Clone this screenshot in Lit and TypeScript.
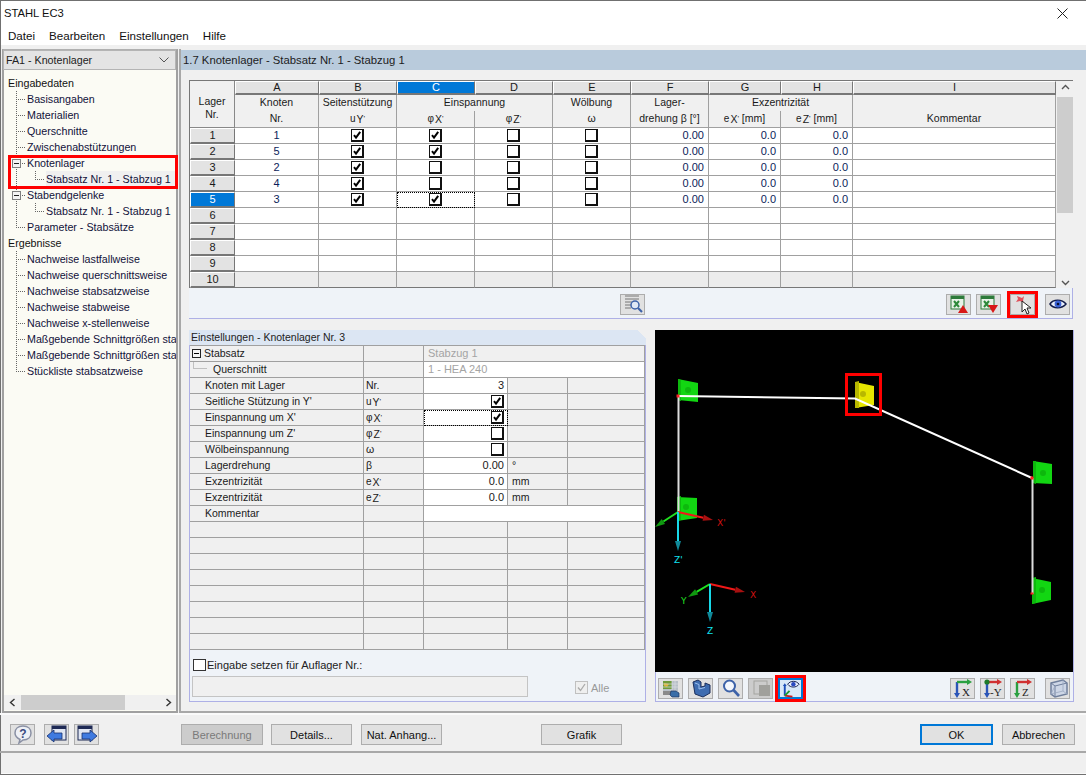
import { LitElement, html, css, svg } from "lit";
import { customElement } from "lit/decorators.js";

const check = html`<svg class="tick" viewBox="0 0 10 10"><path d="M2 5.2 L4 7.6 L8.2 1.8" fill="none" stroke="#000" stroke-width="2"/></svg>`;
const cb = (on: boolean) => html`<span class="cb">${on ? check : ""}</span>`;
const sym = (a: string, b: string) => html`<span class="sym">${a}<span class="sub">${b}</span><span class="pr">'</span></span>`;

type TreeRow = { t: string; k: string; sel?: boolean };
const tree: TreeRow[] = [
  { t: "Eingabedaten", k: "root" },
  { t: "Basisangaben", k: "l1" },
  { t: "Materialien", k: "l1" },
  { t: "Querschnitte", k: "l1" },
  { t: "Zwischenabstützungen", k: "l1" },
  { t: "Knotenlager", k: "ex" },
  { t: "Stabsatz Nr. 1 - Stabzug 1", k: "l2", sel: true },
  { t: "Stabendgelenke", k: "ex" },
  { t: "Stabsatz Nr. 1 - Stabzug 1", k: "l2" },
  { t: "Parameter - Stabsätze", k: "l1 last" },
  { t: "Ergebnisse", k: "root" },
  { t: "Nachweise lastfallweise", k: "l1" },
  { t: "Nachweise querschnittsweise", k: "l1" },
  { t: "Nachweise stabsatzweise", k: "l1" },
  { t: "Nachweise stabweise", k: "l1" },
  { t: "Nachweise x-stellenweise", k: "l1" },
  { t: "Maßgebende Schnittgrößen sta", k: "l1" },
  { t: "Maßgebende Schnittgrößen sta", k: "l1" },
  { t: "Stückliste stabsatzweise", k: "l1 last" },
];

const letters = ["A", "B", "C", "D", "E", "F", "G", "H", "I"];
const rowsData: [string, boolean, boolean][] = [
  ["1", true, true],
  ["5", true, true],
  ["2", true, false],
  ["4", true, false],
  ["3", true, true],
];

const icons: Record<string, unknown> = {
  search: svg`<path d="M3 2h14M3 5h14M3 8h8M3 11h6M3 14h6" stroke="#777" fill="none"/><circle cx="13" cy="11" r="4" fill="#dfe8f5" stroke="#3d62a8" stroke-width="1.5"/><path d="M16 14l4 4" stroke="#3d62a8" stroke-width="2.2"/>`,
  xlsUp: svg`<rect x="3" y="2" width="13" height="13" fill="#e8f2e8" stroke="#2d7a3a"/><rect x="3" y="2" width="13" height="3" fill="#2d7a3a"/><path d="M6 7l5 6M11 7l-5 6" stroke="#2d8a3a" stroke-width="2"/><path d="M10 19l5-8 5 8z" fill="#d81818"/>`,
  xlsDown: svg`<rect x="3" y="2" width="13" height="13" fill="#e8f2e8" stroke="#2d7a3a"/><rect x="3" y="2" width="13" height="3" fill="#2d7a3a"/><path d="M6 7l5 6M11 7l-5 6" stroke="#2d8a3a" stroke-width="2"/><path d="M10 11h10l-5 8z" fill="#d81818"/>`,
  pick: svg`<path d="M5 2l5 2 2-2-1 5 1 2-4-2-4 1 2-3z" fill="#e0505a"/><path d="M10 7v11l3-3 2 5 2-1-2-5h4z" fill="#fff" stroke="#222"/>`,
  eye: svg`<path d="M3 10c3-5 12-5 16 0-4 5-13 5-16 0z" fill="#e8eefc" stroke="#111b4a" stroke-width="1.5"/><circle cx="11" cy="10" r="3.4" fill="#3b62d6"/><circle cx="11" cy="10" r="1.3" fill="#0a1030"/>`,
  render: svg`<rect x="3" y="3" width="15" height="10" fill="#b8c0c8"/><rect x="3" y="3" width="9" height="8" fill="#6f9a3a"/><path d="M4 5l5 1-2 3-3-1z" fill="#d8b030"/><path d="M12 3v10M15 3v10M3 6h15M3 9h15" stroke="#d8dce2" stroke-width=".7"/><rect x="3" y="13" width="8" height="4" fill="#8a8a8a"/><path d="M11 13h5l3 2v4h-7l-2-2z" fill="#3a6ea8" stroke="#1c3560" stroke-width=".7"/>`,
  box: svg`<path d="M3 4l5-2 3 2v5l4-1v-3l5 2v8l-7 4-8-3z" fill="#3e6cb0" stroke="#1c2f5c"/><path d="M5 5l4 1.5V11l6-1.5" stroke="#9cc0ee" fill="none"/>`,
  lens: svg`<circle cx="9.5" cy="8" r="5.5" fill="#f4f7fc" stroke="#3d62a8" stroke-width="2"/><path d="M13.5 12l5.5 6" stroke="#3d62a8" stroke-width="2.6"/>`,
  squares: svg`<rect x="4" y="3" width="13" height="13" fill="none" stroke="#a4a4a0"/><rect x="9" y="7" width="11" height="11" fill="#a0a09c"/>`,
  axesEye: svg`<path d="M5 18V7" stroke="#1d4fb8" stroke-width="2"/><path d="M3 8l2-3 2 3z" fill="#1d4fb8"/><path d="M5 18l8 1" stroke="#d01818" stroke-width="2"/><path d="M5 18l5-5" stroke="#1f9a30" stroke-width="2"/><path d="M8 6c3-4 9-4 12 0-3 4-9 4-12 0z" fill="#e8eefc" stroke="#111b4a"/><circle cx="14" cy="6" r="2.3" fill="#2a4ac0"/>`,
  viewX: svg`<path d="M5 4v12" stroke="#2a55b8" stroke-width="2.4"/><path d="M2 15l3 5 3-5z" fill="#2a55b8"/><path d="M5 4h11" stroke="#2aa040" stroke-width="2.4"/><path d="M15 1l5 3-5 3z" fill="#2aa040"/><text x="10" y="18" class="vt">X</text>`,
  viewY: svg`<path d="M5 4v12" stroke="#2a55b8" stroke-width="2.4"/><path d="M2 15l3 5 3-5z" fill="#2a55b8"/><path d="M5 4h11" stroke="#d03030" stroke-width="2.4"/><path d="M15 1l5 3-5 3z" fill="#d03030"/><circle cx="5" cy="4" r="2.6" fill="#1d7a2a"/><text x="8" y="18" class="vt">-Y</text>`,
  viewZ: svg`<path d="M5 4v12" stroke="#2aa040" stroke-width="2.4"/><path d="M2 15l3 5 3-5z" fill="#2aa040"/><path d="M5 4h11" stroke="#d03030" stroke-width="2.4"/><path d="M15 1l5 3-5 3z" fill="#d03030"/><text x="10" y="18" class="vt">Z</text>`,
  cube: svg`<path d="M4 5l12-3 4 3v11l-12 3-4-3z" fill="#cdd6e6" stroke="#6f7f9c" stroke-width="1.5"/><path d="M8 8l12-3M8 8v11M8 8L4 5" stroke="#6f7f9c" fill="none"/><path d="M4 16l4-8M16 2v11l4 3M4 16l12-3" stroke="#9aa8c0" fill="none" stroke-width=".8"/>`,
  help: svg`<path d="M11 2c5 0 8 3 8 7s-3 7-8 7l-4 3 1-3.5C5 14 3 12 3 9c0-4 3-7 8-7z" fill="#eef0f5" stroke="#8a90a4" stroke-width="1.5"/><text x="11" y="14" class="qm">?</text>`,
  prev: svg`<rect x="6" y="2" width="14" height="14" fill="#dfe5f2" stroke="#1f2a55"/><rect x="6" y="2" width="14" height="3" fill="#1f2a55"/><path d="M1 12l7-6v3h8v6H8v3z" fill="#3f7ae0" stroke="#16306e" stroke-width=".8"/>`,
  next: svg`<rect x="2" y="2" width="14" height="14" fill="#dfe5f2" stroke="#1f2a55"/><rect x="2" y="2" width="14" height="3" fill="#1f2a55"/><path d="M21 12l-7-6v3H6v6h8v3z" fill="#3f7ae0" stroke="#16306e" stroke-width=".8"/>`,
};

const ico = (n: string, cls = "") =>
  html`<span class="tb ${cls}"><svg viewBox="0 0 22 21" width="22" height="21">${icons[n]}</svg></span>`;

const block = (pts: string, side: string, fill: string, dark: string, cx: number, cy: number) => svg`
  <polygon points=${pts} fill=${fill}/>
  <polygon points=${side} fill=${dark}/>
  <circle cx=${cx} cy=${cy} r="3" fill=${dark}/>`;

const arrow = (x1: number, y1: number, x2: number, y2: number, c: string, dark: string) => {
  const dx = x2 - x1, dy = y2 - y1, l = Math.hypot(dx, dy), ux = dx / l, uy = dy / l;
  const bx = x2 - ux * 10, by = y2 - uy * 10;
  return svg`<line x1=${x1} y1=${y1} x2=${bx} y2=${by} stroke=${c} stroke-width="2"/>
    <polygon points="${x2},${y2} ${bx - uy * 3},${by + ux * 3} ${bx + uy * 3},${by - ux * 3}" fill=${dark}/>`;
};

@customElement("app-root")
export class AppRoot extends LitElement {
  static styles = css`
    :host { display: block; width: 1086px; height: 775px; overflow: hidden; font-family: "Liberation Sans", Arial, sans-serif; font-size: 11px; color: #000; }
    * { box-sizing: border-box; }
    .win { width: 1086px; height: 775px; display: flex; flex-direction: column; background: #f0f0f0; border: 1px solid #707070; border-width: 1px 0 1px 1px; }
    .title { height: 24px; background: #fff; display: flex; align-items: center; padding-left: 3px; font-size: 11.2px; color: #111; flex: none; justify-content: space-between; }
    .close { width: 40px; display: flex; justify-content: center; margin-right: 4px; }
    .menu { height: 20px; background: #fff; display: flex; gap: 14px; padding-left: 7px; align-items: center; font-size: 11.6px; flex: none; color: #111; }
    .body { height: 668px; display: flex; padding: 4px 0 0 1px; flex: none; }

    .left { width: 176px; height: 664px; border-style: solid; border-width: 1px 2px 2px 2px; display: flex; flex-direction: column; background: #fbfbf4; flex: none; position: relative; border-color: #b0b0b0 #a0a0a0 #a0a0a0 #a0a0a0; }
    .combo { height: 20px; background: #e4e4e4; border: 1px solid #b4b4b4; display: flex; align-items: center; justify-content: space-between; padding: 0 6px 0 2px; font-size: 10.7px; color: #222; flex: none; margin-left: -1px; }
    .tree { flex: 1; padding-top: 5px; font-size: 10.7px; color: #11113a; overflow: hidden; }
    .r { height: 16px; display: flex; align-items: center; white-space: nowrap; overflow: hidden; }
    .r.root { padding-left: 4px; color: #111; }
    .conn { width: 10px; height: 16px; flex: none; margin-right: 1px;
      background-image: repeating-linear-gradient(to bottom, #666 0 1px, transparent 1px 2px), repeating-linear-gradient(to right, #666 0 1px, transparent 1px 2px);
      background-size: 1px 100%, 100% 1px; background-position: left top, left 8px; background-repeat: no-repeat; }
    .last > .conn { background-size: 1px 50%, 100% 1px; }
    .l1 > .conn, .ex > .conn { margin-left: 12px; }
    .l2 > .guide { width: 1px; height: 16px; margin-left: 12px; flex: none; background: repeating-linear-gradient(to bottom, #666 0 1px, transparent 1px 2px); }
    .l2 > .conn { margin-left: 18px; background-size: 1px 50%, 100% 1px; }
    .bx { display: block; width: 9px; height: 9px; margin: 4px 0 0 -4px; background: #f4f4f4; border: 1px solid #808080; }
    .bx::after { content: ""; display: block; margin: 3px 1px 0; height: 1px; background: #222; }
    .sel .lbl { background: #f0f0f0; flex: 1; line-height: 16px; }
    .redtree { position: absolute; left: 4px; top: 105px; width: 170px; height: 34px; border: 3px solid #f00; pointer-events: none; }
    .hs { height: 15px; margin-bottom: 1px; background: #f0f0f0; display: flex; align-items: center; justify-content: space-between; padding: 0 4px 0 5px; flex: none; }
    .hs .th { width: 104px; height: 15px; background: #cdcdcd; margin-left: 5px; }

    .main { flex: 1; margin-left: 1px; border-left: 2px solid #a8a8a8; border-bottom: 2px solid #a8a8a8; height: 664px; display: flex; flex-direction: column; padding-top: 1px; }
    .head { height: 20px; background: #b9cbdc; padding-left: 2px; display: flex; align-items: center; font-size: 11.3px; color: #1c1c1c; flex: none; }
    .tablewrap { margin: 10px 0 0 8px; width: 884px; display: flex; flex: none; border: 1px solid #777; border-width: 1px 0 0 1px; background: #f0f0f0; }
    .grid { display: grid; grid-template-columns: 45px 84px 78px 78px 78px 78px 78px 72px 72px 203px; grid-template-rows: 14px 16px 17px repeat(10, 16px); width: 866px; flex: none; }
    .c { display: flex; align-items: center; justify-content: center; border-right: 1px solid #a0a0a0; border-bottom: 1px solid #a0a0a0; font-size: 10.5px; color: #1a1a1a; white-space: nowrap; background: #fff; overflow: hidden; padding-bottom: 1px; }
    .corner { grid-row: 1 / span 3; flex-direction: column; background: #f0f0f0; padding: 7px 0 0; line-height: 13px; border-right-color: #888; border-bottom-color: #888; }
    .let { background: #e3e3e3; border-bottom: 2px solid #777; border-right: 1px solid #777; border-left: 1px solid #fff; border-top: 1px solid #fff; font-size: 11px; line-height: 11px; padding: 0; }
    .let.on { background: #0078d7; color: #fff; }
    .h1, .h2 { background: #f0f0f0; }
    .h1 { border-bottom: none; padding-bottom: 2px; }
    .h2 { padding-bottom: 2px; }
    .h1.s2 { grid-column: span 2; }
    .rh { background: #e3e3e3; border-right: 1px solid #777; border-bottom: 2px solid #777; border-left: 1px solid #fff; border-top: 1px solid #fff; font-size: 11px; padding-bottom: 1px; }
    .rh.on { background: #0078d7; color: #fff; border-color: #fff #777 #777 #fff; }
    .num { justify-content: flex-end; padding-right: 4px; color: #0b1d5a; font-size: 11px; }
    .mid { color: #0b1d5a; font-size: 11px; }
    .foot { background: #ececec; }
    .focus { outline: 1px dotted #000; outline-offset: -1px; }
    .lastrow { border-bottom-color: #777; }
    .vs { width: 16px; margin-left: 1px; background: #f0f0f0; display: flex; flex-direction: column; align-items: center; height: 207px; }
    .vs .thumb { width: 16px; height: 116px; background: #cdcdcd; margin-top: 5px; flex: none; }
    .ar { height: 11px; display: flex; align-items: center; justify-content: center; flex: none; }
    .ar svg { display: block; }

    .strip { margin-left: 8px; width: 884px; height: 31px; background: #eff3f8; border: 1px solid #aeb0e6; border-width: 0 1px 1px 0; display: flex; padding: 6px 2px 0 431px; flex: none; }
    .sp { flex: 1; }
    .tb { width: 25px; height: 21px; background: #e1e1e1; border: 1px solid #adadad; display: flex; align-items: center; justify-content: center; flex: none; }
    .tb svg { display: block; }
    .m5 { margin-left: 5px; }
    .m9 { margin-left: 9px; }
    .m10 { margin-left: 10px; }
    .hl { outline: 3px solid #f00; }
    .blue { border: 2px solid #0078d7; background: #d8e8f8; }
    .dis { background: #cccccc; }

    .lower { display: flex; margin: 11px 0 0 8px; gap: 9px; height: 372px; flex: none; }
    .set { width: 457px; display: flex; flex-direction: column; background: #eff3f8; border: 1px solid #aeb0e6; border-width: 0 1px 1px 1px; }
    .settitle { height: 15px; background: linear-gradient(225deg, #f0f0f0 6px, #dce6f3 6px); font-size: 10.5px; color: #222; display: flex; align-items: center; flex: none; margin: 0 -1px; padding: 0 0 1px 2px; }
    .pg { display: grid; grid-template-columns: 174px 60px 84px 60px 77px; grid-auto-rows: 16px; border-top: 1px solid #a0a0a0; flex: none; }
    .p { background: #f0f0f0; border-right: 1px solid #a0a0a0; border-bottom: 1px solid #a0a0a0; display: flex; align-items: center; padding: 0 0 1px 2px; font-size: 10.5px; color: #1a1a1a; white-space: nowrap; overflow: hidden; min-width: 0; }
    .pn { padding-left: 15px; }
    .nm { padding-left: 0; }
    .w { background: #fff; }
    .val { justify-content: flex-end; padding: 0 3px 1px 0; color: #1a1a1a; font-size: 11px; }
    .s3c { grid-column: span 3; }
    .gray { color: #a4a4a4; padding-left: 4px; font-size: 11px; }
    .unit { padding-left: 4px; }
    .pm { display: inline-block; width: 9px; height: 9px; border: 1px solid #222; background: #f4f4f4; margin: 0 3px 0 2px; flex: none; }
    .pm::after { content: ""; display: block; height: 1px; background: #000; margin: 3px 1px 0; }
    .tl { width: 14px; height: 8px; border-left: 1px solid #c0c0c0; border-bottom: 1px solid #c0c0c0; margin: -8px 6px 0 3px; flex: none; }
    .cb { width: 13px; height: 13px; background: #fff; border: 1px solid #111; border-right-width: 2px; border-bottom-width: 2px; display: inline-flex; align-items: center; justify-content: center; flex: none; }
    .tick { width: 10px; height: 10px; display: block; }
    .sym { display: inline-flex; align-items: baseline; font-size: 10px; color: #222; }
    .sub { font-size: 10.5px; margin-left: 1px; position: relative; top: 1px; }
    .pr { font-size: 8px; position: relative; top: -1px; }
    .setfoot { flex: 1; padding: 9px 2px 0 3px; display: flex; flex-direction: column; }
    .ck { display: flex; align-items: center; gap: 1px; font-size: 11px; color: #222; }
    .ck .box { width: 13px; height: 12px; border: 1px solid #333; background: #fff; }
    .fr { display: flex; margin-top: 5px; align-items: flex-end; }
    .inp { width: 336px; height: 21px; background: #f0f0f0; border: 1px solid #c4c4c4; margin-left: -1px; }
    .alle { display: flex; align-items: center; gap: 3px; margin-left: 47px; color: #999; font-size: 11px; margin-bottom: 3px; }
    .alle .box { width: 13px; height: 13px; border: 1px solid #c0c0c0; background: #efefef; display: block; }

    .gfx { width: 419px; display: flex; flex-direction: column; background: #eff3f8; border: 1px solid #aeb0e6; border-width: 0 1px 1px 1px; }
    .cv { width: 418px; height: 342px; margin-left: -1px; background: #000; flex: none; display: block; }
    .cv text { font-family: "DejaVu Sans", sans-serif; font-size: 9px; }
    .gt { display: flex; padding: 6px 3px 0 2px; gap: 5px; }
    .gt .m5 { margin-left: 5px; }

    .vt { font-family: "Liberation Serif", serif; font-size: 11px; fill: #222; }
    .qm { font-family: "Liberation Sans", sans-serif; font-size: 12px; font-weight: bold; fill: #3a4a80; text-anchor: middle; }

    .foot2 { height: 40px; border-bottom: 2px solid #a8a8a8; border-top: 2px solid #fafafa; display: flex; padding: 9px 0 0 10px; flex: none; margin-left: -1px; }
    .btn { height: 21px; width: 81px; background: #e1e1e1; border: 1px solid #adadad; display: flex; align-items: center; justify-content: center; font-size: 11px; color: #111; flex: none; }
    .btn.off { width: 82px; background: #cccccc; color: #7a7a7a; margin-left: 82px; }
    .btn.det { margin-left: 8px; }
    .btn.nat { margin-left: 9px; }
    .btn.gra { margin-left: 99px; }
    .btn.ok { width: 73px; border: 2px solid #0078d7; margin-left: 298px; }
    .btn.ab { width: 73px; margin-left: 9px; }
    .status { flex: 1; background: #f0f0f0; border-bottom: 1px solid #fafafa; }
  `;

  render() {
    return html`<div class="win">
      <div class="title"><span>STAHL EC3</span>
        <span class="close"><svg width="11" height="11" viewBox="0 0 11 11"><path d="M.5.5l10 10M10.5.5l-10 10" stroke="#222"/></svg></span>
      </div>
      <div class="menu"><span>Datei</span><span>Bearbeiten</span><span>Einstellungen</span><span>Hilfe</span></div>
      <div class="body">
        <div class="left">
          <div class="combo"><span>FA1 - Knotenlager</span>
            <svg width="10" height="6" viewBox="0 0 10 6"><path d="M.5.5L5 5 9.5.5" fill="none" stroke="#555"/></svg>
          </div>
          <div class="tree">
            ${tree.map((r) => html`<div class="r ${r.k} ${r.sel ? "sel" : ""}">
              ${r.k === "root" ? "" : r.k === "l2"
                ? html`<span class="guide"></span><span class="conn"></span>`
                : html`<span class="conn">${r.k === "ex" ? html`<span class="bx"></span>` : ""}</span>`}
              <span class="lbl">${r.t}</span></div>`)}
          </div>
          <div class="redtree"></div>
          <div class="hs">
            <svg width="7" height="9" viewBox="0 0 7 9"><path d="M5.5 1L1.5 4.5 5.5 8" fill="none" stroke="#333" stroke-width="1.4"/></svg>
            <span class="th"></span><span class="sp"></span>
            <svg width="7" height="9" viewBox="0 0 7 9"><path d="M1.5 1L5.5 4.5 1.5 8" fill="none" stroke="#333" stroke-width="1.4"/></svg>
          </div>
        </div>
        <div class="main">
          <div class="head">1.7 Knotenlager - Stabsatz Nr. 1 - Stabzug 1</div>
          <div class="tablewrap">
            <div class="grid">
              <div class="c corner"><span>Lager</span><span>Nr.</span></div>
              ${letters.map((l) => html`<div class="c let ${l === "C" ? "on" : ""}">${l}</div>`)}
              <div class="c h1">Knoten</div>
              <div class="c h1">Seitenstützung</div>
              <div class="c h1 s2">Einspannung</div>
              <div class="c h1">Wölbung</div>
              <div class="c h1">Lager-</div>
              <div class="c h1 s2">Exzentrizität</div>
              <div class="c h1"></div>
              <div class="c h2">Nr.</div>
              <div class="c h2">${sym("u", "Y")}</div>
              <div class="c h2">${sym("φ", "X")}</div>
              <div class="c h2">${sym("φ", "Z")}</div>
              <div class="c h2">ω</div>
              <div class="c h2">drehung β [°]</div>
              <div class="c h2">${sym("e", "X")}&nbsp;[mm]</div>
              <div class="c h2">${sym("e", "Z")}&nbsp;[mm]</div>
              <div class="c h2">Kommentar</div>
              ${Array.from({ length: 10 }, (_, i) => {
                const d = rowsData[i];
                const foot = i === 9 ? "foot lastrow" : "";
                return html`
                  <div class="c rh ${i === 4 ? "on" : ""}">${i + 1}</div>
                  <div class="c mid ${foot}">${d ? d[0] : ""}</div>
                  <div class="c ${foot}">${d ? cb(d[1]) : ""}</div>
                  <div class="c ${foot} ${i === 4 ? "focus" : ""}">${d ? cb(d[2]) : ""}</div>
                  <div class="c ${foot}">${d ? cb(false) : ""}</div>
                  <div class="c ${foot}">${d ? cb(false) : ""}</div>
                  <div class="c num ${foot}">${d ? "0.00" : ""}</div>
                  <div class="c num ${foot}">${d ? "0.0" : ""}</div>
                  <div class="c num ${foot}">${d ? "0.0" : ""}</div>
                  <div class="c ${foot}"></div>`;
              })}
            </div>
            <div class="vs">
              <span class="ar"><svg width="9" height="6" viewBox="0 0 9 6"><path d="M1 5l3.5-3.5L8 5" fill="none" stroke="#555" stroke-width="1.4"/></svg></span>
              <span class="thumb"></span><span class="sp"></span>
              <span class="ar"><svg width="9" height="6" viewBox="0 0 9 6"><path d="M1 1l3.5 3.5L8 1" fill="none" stroke="#555" stroke-width="1.4"/></svg></span>
            </div>
          </div>
          <div class="strip">
            ${ico("search")}<span class="sp"></span>
            ${ico("xlsUp")}${ico("xlsDown", "m5")}${ico("pick", "hl m9")}${ico("eye", "m10")}
          </div>
          <div class="lower">
            <div class="set">
              <div class="settitle">Einstellungen - Knotenlager Nr. 3</div>
              <div class="pg">
                <div class="p nm"><span class="pm"></span>Stabsatz</div><div class="p"></div><div class="p s3c gray">Stabzug 1</div>
                <div class="p nm"><span class="tl"></span>Querschnitt</div><div class="p"></div><div class="p s3c w gray">1 - HEA 240</div>
                ${this.prow("Knoten mit Lager", "Nr.", html`3`, "")}
                ${this.prow("Seitliche Stützung in Y'", sym("u", "Y"), cb(true), "")}
                ${this.prow("Einspannung um X'", sym("φ", "X"), cb(true), "", true)}
                ${this.prow("Einspannung um Z'", sym("φ", "Z"), cb(false), "")}
                ${this.prow("Wölbeinspannung", "ω", cb(false), "")}
                ${this.prow("Lagerdrehung", "β", html`0.00`, "°")}
                ${this.prow("Exzentrizität", sym("e", "X"), html`0.0`, "mm")}
                ${this.prow("Exzentrizität", sym("e", "Z"), html`0.0`, "mm")}
                <div class="p pn">Kommentar</div><div class="p"></div><div class="p s3c w"></div>
                ${Array.from({ length: 8 }, () => html`<div class="p"></div><div class="p"></div><div class="p"></div><div class="p"></div><div class="p"></div>`)}
              </div>
              <div class="setfoot">
                <div class="ck"><span class="box"></span>Eingabe setzen für Auflager Nr.:</div>
                <div class="fr"><span class="inp"></span>
                  <span class="alle"><span class="box"><svg viewBox="0 0 11 11" width="11" height="11"><path d="M2 5.5L4.5 8.5 9 2" fill="none" stroke="#aaa" stroke-width="1.3"/></svg></span>Alle</span>
                </div>
              </div>
            </div>
            <div class="gfx">
              ${this.canvas()}
              <div class="gt">
                ${ico("render")}${ico("box")}${ico("lens")}${ico("squares", "dis")}${ico("axesEye", "hl blue")}
                <span class="sp"></span>
                ${ico("viewX")}${ico("viewY")}${ico("viewZ")}${ico("cube", "m5")}
              </div>
            </div>
          </div>
        </div>
      </div>
      <div class="foot2">
        ${ico("help")}${ico("prev", "m9")}${ico("next", "m5")}
        <span class="btn off">Berechnung</span>
        <span class="btn det">Details...</span>
        <span class="btn nat">Nat. Anhang...</span>
        <span class="btn gra">Grafik</span>
        <span class="btn ok">OK</span>
        <span class="btn ab">Abbrechen</span>
      </div>
      <div class="status"></div>
    </div>`;
  }

  prow(n: string, s: unknown, v: unknown, u: string, focus = false) {
    return html`<div class="p pn">${n}</div><div class="p">${s}</div>
      <div class="p w val ${focus ? "focus" : ""}">${v}</div><div class="p unit">${u}</div><div class="p"></div>`;
  }

  canvas() {
    const g = "#12d612", gd = "#0db80d";
    return html`<svg class="cv" viewBox="0 0 418 342">
      ${block("23,49 43,53 43,72 23,70", "23,49 26,50 26,71 23,70", g, gd, 33, 60)}
      ${block("22,167 42,168 42,188 22,191", "22,167 26,166 26,190 22,191", g, gd, 31, 177)}
      ${block("378,131 397,134 397,154 378,153", "378,131 381,131 381,154 378,153", g, gd, 388, 143)}
      ${block("377,248 396,252 396,270 377,274", "377,248 381,247 381,273 377,274", g, gd, 387, 260)}
      ${block("200,52 219,56 219,75 200,78", "200,52 204,51 204,78 200,78", "#e6e600", "#b8b800", 208, 64)}
      <polyline points="23,66 200,68.5 377,148" fill="none" stroke="#fff" stroke-width="2"/>
      <line x1="23.5" y1="66" x2="23.5" y2="182" stroke="#ddd" stroke-width="2"/>
      <line x1="377.5" y1="148" x2="377.5" y2="264" stroke="#ddd" stroke-width="2"/>
      <g fill="#f22"><rect x="21.5" y="64.5" width="3" height="3"/><rect x="375.5" y="146.5" width="3" height="3"/><rect x="375.5" y="262.5" width="3" height="2"/></g>
      ${arrow(23, 182, 58, 190, "#f01818", "#a81010")}
      ${arrow(23, 182, 0, 197, "#20e020", "#109810")}
      ${arrow(23, 182, 23, 221, "#18d8e8", "#108898")}
      <text x="62" y="196" fill="#d01010">X'</text>
      <text x="19" y="233" fill="#10e0f0">Z'</text>
      ${arrow(55, 254, 90, 262, "#f01818", "#a81010")}
      ${arrow(55, 254, 33, 267, "#20e020", "#109810")}
      ${arrow(55, 254, 55, 292, "#18d8e8", "#108898")}
      <text x="95" y="268" fill="#d01010">X</text>
      <text x="26" y="274" fill="#20e020">Y</text>
      <text x="52" y="304" fill="#10e0f0">Z</text>
      <rect x="191.5" y="44.5" width="34" height="40" fill="none" stroke="#f00" stroke-width="3"/>
    </svg>`;
  }
}
